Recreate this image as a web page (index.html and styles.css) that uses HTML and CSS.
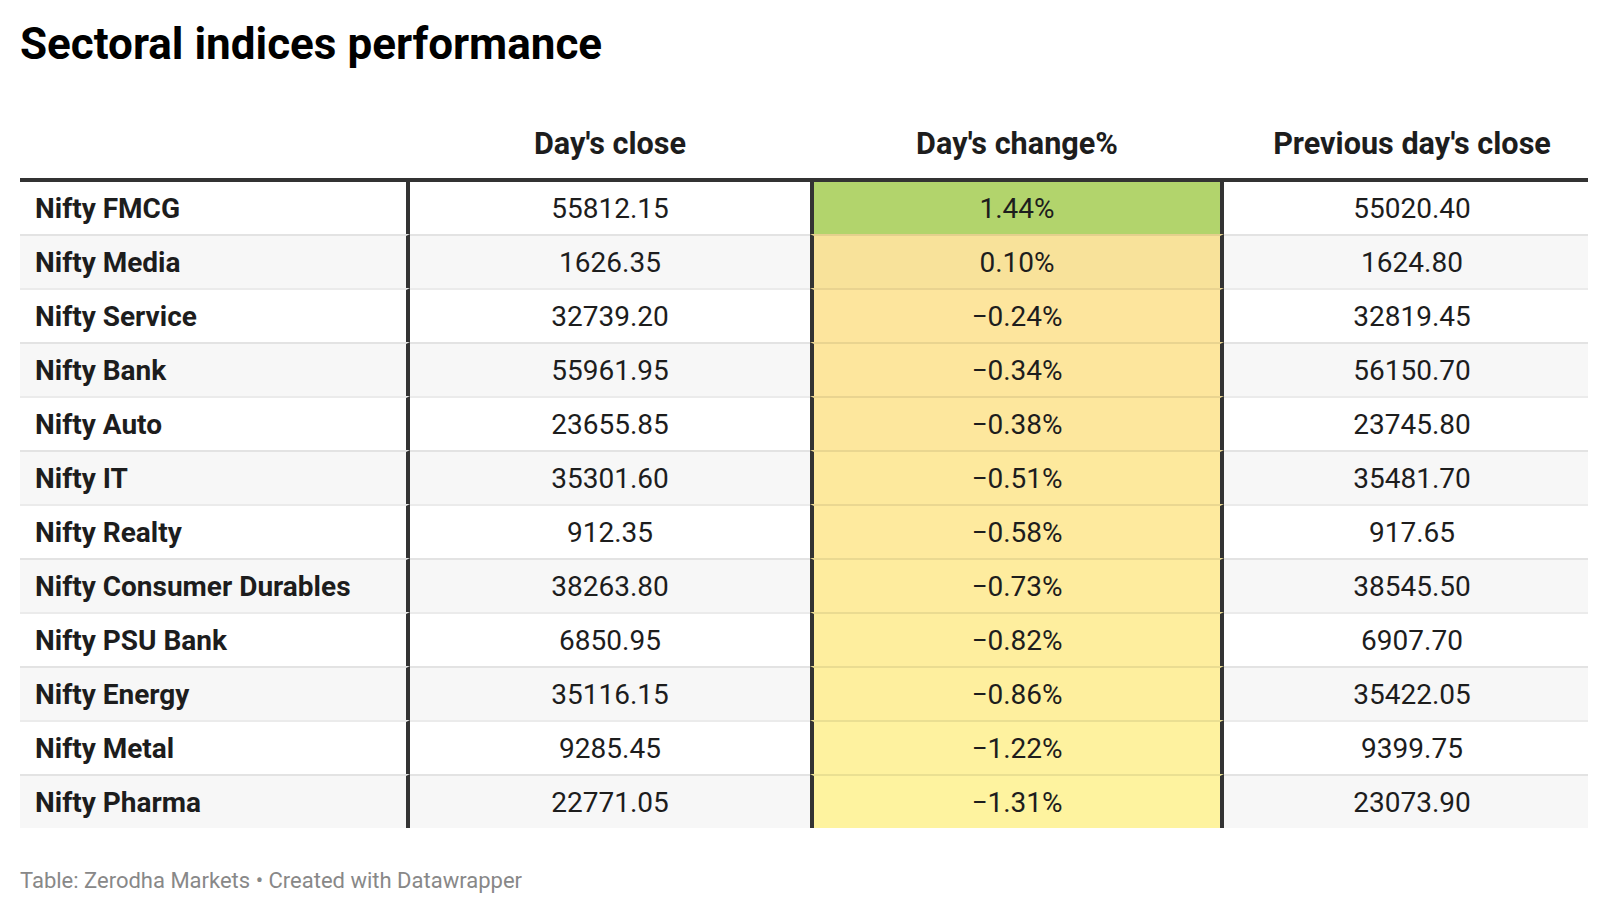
FILE: index.html
```html
<!DOCTYPE html>
<html lang="en">
<head>
<meta charset="utf-8">
<title>Sectoral indices performance</title>
<link rel="stylesheet" href="styles.css">
</head>
<body>
<div class="chart">
  <h1 class="title">Sectoral indices performance</h1>
  <table class="tbl">
    <thead>
      <tr>
        <th class="c1"></th>
        <th class="c2">Day's close</th>
        <th class="c3">Day's change%</th>
        <th class="c4">Previous day's close</th>
      </tr>
    </thead>
    <tbody>
      <tr><td class="c1">Nifty FMCG</td><td class="c2">55812.15</td><td class="c3" style="background:#b2d46c">1.44%</td><td class="c4">55020.40</td></tr>
      <tr><td class="c1">Nifty Media</td><td class="c2">1626.35</td><td class="c3" style="background:#f8e29a">0.10%</td><td class="c4">1624.80</td></tr>
      <tr><td class="c1">Nifty Service</td><td class="c2">32739.20</td><td class="c3" style="background:#fde59d">−0.24%</td><td class="c4">32819.45</td></tr>
      <tr><td class="c1">Nifty Bank</td><td class="c2">55961.95</td><td class="c3" style="background:#fde69d">−0.34%</td><td class="c4">56150.70</td></tr>
      <tr><td class="c1">Nifty Auto</td><td class="c2">23655.85</td><td class="c3" style="background:#fde79d">−0.38%</td><td class="c4">23745.80</td></tr>
      <tr><td class="c1">Nifty IT</td><td class="c2">35301.60</td><td class="c3" style="background:#fde99d">−0.51%</td><td class="c4">35481.70</td></tr>
      <tr><td class="c1">Nifty Realty</td><td class="c2">912.35</td><td class="c3" style="background:#feea9e">−0.58%</td><td class="c4">917.65</td></tr>
      <tr><td class="c1">Nifty Consumer Durables</td><td class="c2">38263.80</td><td class="c3" style="background:#feec9e">−0.73%</td><td class="c4">38545.50</td></tr>
      <tr><td class="c1">Nifty PSU Bank</td><td class="c2">6850.95</td><td class="c3" style="background:#feee9e">−0.82%</td><td class="c4">6907.70</td></tr>
      <tr><td class="c1">Nifty Energy</td><td class="c2">35116.15</td><td class="c3" style="background:#feef9e">−0.86%</td><td class="c4">35422.05</td></tr>
      <tr><td class="c1">Nifty Metal</td><td class="c2">9285.45</td><td class="c3" style="background:#fef29f">−1.22%</td><td class="c4">9399.75</td></tr>
      <tr><td class="c1">Nifty Pharma</td><td class="c2">22771.05</td><td class="c3" style="background:#fef39f">−1.31%</td><td class="c4">23073.90</td></tr>
    </tbody>
  </table>
  <p class="footer">Table: Zerodha Markets • Created with Datawrapper</p>
</div>
</body>
</html>
```
FILE: styles.css
```css
* { box-sizing: border-box; }
html, body {
  margin: 0;
  padding: 0;
  background: #ffffff;
}
body {
  font-family: Roboto, "Liberation Sans", Arial, sans-serif;
  color: #181818;
}
.chart {
  padding: 18px 20px 0 20px;
}
.title {
  margin: 0;
  font-size: 44px;
  line-height: 1.2;
  font-weight: 700;
  color: #000000;
}
.tbl {
  margin-top: 37px;
  width: 1568px;
  table-layout: fixed;
  border-collapse: separate;
  border-spacing: 0;
  font-size: 28px;
  line-height: 30px;
}
.tbl th {
  font-size: 30.6px;
  font-weight: 700;
  color: #1d1d1d;
  padding: 21px 15px 19px 15px;
  border-bottom: 4px solid #333333;
  text-align: center;
  white-space: nowrap;
}
.tbl th.c1 { width: 390px; }
.tbl th.c2 { width: 400px; }
.tbl th.c3 { width: 414px; }
.tbl th.c4 { width: 364px; padding-left: 20px; padding-right: 8px; }
.tbl td {
  padding: 12px 15px 10px 15px;
  text-align: center;
  color: #1d1d1d;
  white-space: nowrap;
}
.tbl tbody tr:nth-child(even) td { background: #f7f7f7; }
.tbl tbody tr + tr td { border-top: 2px solid rgba(0, 0, 0, 0.08); }
.tbl td.c1 {
  text-align: left;
  font-weight: 700;
  border-right: 4px solid #333333;
}
.tbl td.c3 {
  border-left: 4px solid #333333;
  border-right: 4px solid #333333;
}
.tbl td.c4 { padding-left: 20px; padding-right: 8px; }
.footer {
  margin: 40px 0 0 0;
  font-size: 22px;
  line-height: 26px;
  color: #888888;
}
```
